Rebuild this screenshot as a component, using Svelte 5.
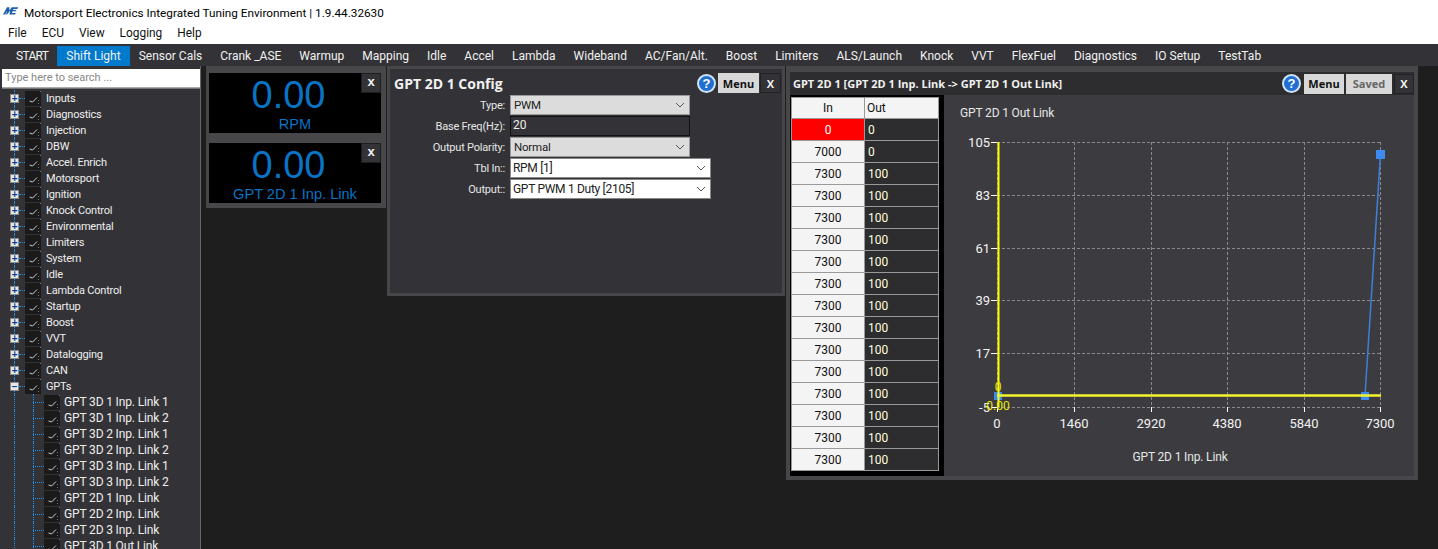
<script lang="ts">
  const tabs = ["START","Shift Light","Sensor Cals","Crank _ASE","Warmup","Mapping","Idle","Accel","Lambda","Wideband","AC/Fan/Alt.","Boost","Limiters","ALS/Launch","Knock","VVT","FlexFuel","Diagnostics","IO Setup","TestTab"];
  const roots = ["Inputs","Diagnostics","Injection","DBW","Accel. Enrich","Motorsport","Ignition","Knock Control","Environmental","Limiters","System","Idle","Lambda Control","Startup","Boost","VVT","Datalogging","CAN"];
  const children = ["GPT 3D 1 Inp. Link 1","GPT 3D 1 Inp. Link 2","GPT 3D 2 Inp. Link 1","GPT 3D 2 Inp. Link 2","GPT 3D 3 Inp. Link 1","GPT 3D 3 Inp. Link 2","GPT 2D 1 Inp. Link","GPT 2D 2 Inp. Link","GPT 2D 3 Inp. Link","GPT 3D 1 Out Link"];
  const rows = [[0,0],[7000,0],...Array(14).fill([7300,100])];
  const yTicks = [[105,142],[83,195],[61,248],[39,300],[17,353],[-5,407]];
  const xTicks = [[0,997],[1460,1074],[2920,1151],[4380,1227],[5840,1304],[7300,1380]];
</script>

{#snippet nodeIcon()}
  <span class="nicon"><svg width="16" height="15" viewBox="0 0 16 15"><path d="M4.500 10 L7.500 11 L12 6.500" stroke="#cfcfcf" fill="none"/><path d="M13.500 9v1M13.500 12v1M15.500 0v1" stroke="#777"/></svg></span>
{/snippet}

{#snippet chevron()}
  <svg width="10" height="6" viewBox="0 0 10 6"><path d="M1 1 L5 5 L9 1" fill="none" stroke="#555"/></svg>
{/snippet}

<div class="app">
  <div class="titlebar">
    <svg class="logo" width="16" height="9" viewBox="0 0 20 10"><path d="M0 10 L5 1 H8 L8 5 L11 1 H19 L18 3 H13 L12.500 4.500 H17 L16 6 H12 L11 8 H16 L15 10 H8 L9 5 L5 10 H4 L5 5 L3 10 Z" fill="#1b5fae"/></svg>
    <span>Motorsport Electronics Integrated Tuning Environment | 1.9.44.32630</span>
  </div>
  <div class="menubar">
    <span>File</span><span>ECU</span><span>View</span><span>Logging</span><span>Help</span>
  </div>
  <div class="tabs">
    {#each tabs as t}
      <div class="tab" class:active={t === "Shift Light"}>{t}</div>
    {/each}
  </div>
  <div class="workspace">
    <aside class="sidebar">
      <div class="search">Type here to search ...</div>
      <div class="tree">
        {#each roots as r}
          <div class="node">
            <span class="vline"></span>
            <span class="exp">+</span>
            <span class="hdots"></span>
            {@render nodeIcon()}
            <span class="nlabel">{r}</span>
          </div>
        {/each}
        <div class="node">
          <span class="vline"></span>
          <span class="exp open">−</span>
          <span class="hdots"></span>
          {@render nodeIcon()}
          <span class="nlabel">GPTs</span>
        </div>
        {#each children as c}
          <div class="node child">
            <span class="vline"></span>
            <span class="vline second"></span>
            <span class="hdots"></span>
            {@render nodeIcon()}
            <span class="nlabel">{c}</span>
          </div>
        {/each}
      </div>
    </aside>

    <div class="gauges">
      <div class="gauge">
        <div class="closex">x</div>
        <div class="gval">0.00</div>
        <div class="gname">RPM</div>
      </div>
      <div class="gauge">
        <div class="closex">x</div>
        <div class="gval">0.00</div>
        <div class="gname">GPT 2D 1 Inp. Link</div>
      </div>
    </div>

    <section class="config">
      <header class="chead">
        <h2>GPT 2D 1 Config</h2>
        <span class="help">?</span>
        <button class="btn">Menu</button>
        <button class="xbtn">X</button>
      </header>
      <div class="form">
        <label>Type:</label>
        <div class="sel gray w180">PWM{@render chevron()}</div>
        <label>Base Freq(Hz):</label>
        <div class="inp w180">20</div>
        <label>Output Polarity:</label>
        <div class="sel gray w180">Normal{@render chevron()}</div>
        <label>Tbl In::</label>
        <div class="sel white">RPM [1]{@render chevron()}</div>
        <label>Output::</label>
        <div class="sel white">GPT PWM 1 Duty [2105]{@render chevron()}</div>
      </div>
    </section>

    <section class="tablewin">
      <header class="thead">
        <h3>GPT 2D 1 [GPT 2D 1 Inp. Link -&gt; GPT 2D 1 Out Link]</h3>
        <span class="help">?</span>
        <button class="btn">Menu</button>
        <button class="btn saved">Saved</button>
        <button class="xbtn">X</button>
      </header>
      <div class="tbody">
        <div class="grid">
          <div class="hc">In</div><div class="hc left">Out</div>
          {#each rows as r, i}
            <div class="inc" class:hot={i === 0}>{r[0]}</div>
            <div class="outc">{r[1]}</div>
          {/each}
        </div>
        <div class="chart">
          <svg width="470" height="381" viewBox="944 95 470 381">
            <text x="960" y="117" class="ct">GPT 2D 1 Out Link</text>
            <g stroke="#8a8a8a" stroke-dasharray="3 2" fill="none">
              {#each yTicks as t}<line x1="997" x2="1380" y1={t[1] + 0.5} y2={t[1] + 0.5}/>{/each}
              {#each xTicks as t}<line y1="142" y2="407" x1={t[1] + 0.5} x2={t[1] + 0.5}/>{/each}
            </g>
            {#each yTicks as t}
              <text x="990" y={t[1] + 5} text-anchor="end" class="ax">{t[0]}</text>
              <line x1="991" x2="997" y1={t[1] + 0.5} y2={t[1] + 0.5} stroke="#fff"/>
            {/each}
            {#each xTicks as t}
              <text x={t[1]} y="428" text-anchor="middle" class="ax">{t[0]}</text>
              <line y1="407" y2="412" x1={t[1] + 0.5} x2={t[1] + 0.5} stroke="#fff"/>
            {/each}
            <text x="1180" y="461" text-anchor="middle" class="ct">GPT 2D 1 Inp. Link</text>
            <line x1="1365" y1="396" x2="1380.500" y2="154" stroke="#3d7fd9" stroke-width="1.500"/>
            <rect x="994" y="392" width="8" height="8" fill="#3d8bf0"/>
            <rect x="1361" y="392" width="8" height="8" fill="#3d8bf0"/>
            <rect x="1376" y="150" width="9" height="9" fill="#3d8bf0"/>
            <line x1="998.500" x2="998.500" y1="142" y2="407" stroke="#ffff00" stroke-width="2"/>
            <line x1="997" x2="1381" y1="395.500" y2="395.500" stroke="#f4f42c" stroke-width="2.500"/>
            <text x="998" y="391" text-anchor="middle" class="yl">0</text>
            <text x="998" y="410" text-anchor="middle" class="yl">0.00</text>
          </svg>
        </div>
      </div>
    </section>
  </div>
</div>

<style>
  :global(body) { margin: 0; background: #1e1e1e; }

  .app {
    width: 1438px;
    height: 549px;
    overflow: hidden;
    display: flex;
    flex-direction: column;
    font-family: Roboto, sans-serif;
  }

  .titlebar {
    height: 22px;
    background: #fff;
    display: flex;
    align-items: center;
    padding-left: 3px;
    gap: 5px;
    font-size: 11.750px;
    color: #000;
    box-sizing: border-box;
    padding-top: 4px;
  }
  .logo { margin-top: -6px; }

  .menubar {
    height: 22px;
    background: #fff;
    display: flex;
    align-items: center;
    gap: 15px;
    padding-left: 8px;
    font-size: 11.900px;
    color: #111;
  }

  .tabs {
    height: 22px;
    background: #333337;
    display: flex;
    align-items: flex-end;
    padding-left: 7px;
    color: #f1f1f1;
    font-size: 12px;
  }
  .tab {
    padding: 0 9px;
    height: 20px;
    line-height: 20px;
    white-space: nowrap;
  }
  .tab:first-child { letter-spacing: -0.7px; }
  .tab.active { background: #007acc; }

  .workspace {
    flex: 1;
    display: flex;
    align-items: flex-start;
    background: #1e1e1e;
    min-height: 0;
  }

  .sidebar {
    width: 200px;
    height: 483px;
    flex: none;
    background: #333337;
    border-right: 1px solid #666;
    overflow: hidden;
    margin-right: 5px;
  }
  .search {
    height: 19px;
    margin: 3px 0 0 2px;
    background: #fff;
    color: #888;
    font: 11px/18px Roboto, sans-serif;
    padding-left: 3px;
    border-bottom: 1px solid #aaa;
    box-sizing: border-box;
  }
  .tree { padding-top: 1px; border-top: 1px solid #777; margin-left: 2px; }
  .node {
    position: relative;
    height: 16px;
    display: flex;
    align-items: center;
    font: 11px Roboto, sans-serif;
    letter-spacing: -0.2px;
    color: #eee;
  }
  .node.child { font-size: 12px; letter-spacing: -0.15px; }
  .vline {
    position: absolute;
    left: 12px;
    top: 0;
    bottom: 0;
    border-left: 1px dotted #1e8fe8;
  }
  .vline.second { left: 31px; }
  .exp {
    width: 9px;
    height: 9px;
    margin-left: 8px;
    background: #e8e8e8;
    border: 1px solid #8a8a8a;
    box-sizing: border-box;
    color: #14408c;
    font: bold 10px/7px "Liberation Sans", sans-serif;
    text-align: center;
    flex: none;
    position: relative;
  }
  .hdots {
    width: 6px;
    border-top: 1px dotted #1e8fe8;
    flex: none;
    position: relative;
  }
  .child .hdots { width: 11px; margin-left: 31px; }
  .nicon {
    width: 16px;
    height: 15px;
    background: #1a1a1a;
    flex: none;
    margin-right: 5px;
    position: relative;
  }
  .nicon svg { display: block; }
  .child .nicon { margin-right: 4px; }
  .nlabel { white-space: nowrap; }

  .gauges {
    width: 180px;
    flex: none;
    background: #47474a;
    padding: 7px 5px 5px 3px;
    box-sizing: border-box;
    display: flex;
    flex-direction: column;
    gap: 10px;
  }
  .gauge {
    position: relative;
    height: 60px;
    background: #000;
    text-align: center;
    color: #0a73c4;
    font-family: "Liberation Sans", sans-serif;
    padding-top: 1px;
    box-sizing: border-box;
  }
  .closex {
    position: absolute;
    right: 0;
    top: 0;
    width: 20px;
    height: 20px;
    background: #333337;
    border: 1px solid #1e1e1e;
    box-sizing: border-box;
    color: #f1f1f1;
    font: bold 13px/16px "Liberation Sans", sans-serif;
  }
  .gval { font-size: 38px; line-height: 42px; padding-right: 13px; }
  .gname { font-size: 14.600px; line-height: 16px; }

  .config {
    width: 398px;
    height: 230px;
    margin-left: 1px;
    flex: none;
    background: #333337;
    border: 3px solid #47474a;
    box-sizing: border-box;
  }
  .chead, .thead {
    display: flex;
    align-items: center;
  }
  .chead { height: 24px; padding: 4px 0 0 4px; box-sizing: border-box; gap: 1px; }
  .chead h2 {
    margin: 1px auto 0 0;
    font: 700 14px "Open Sans", sans-serif;
    color: #f1f1f1;
  }
  .chead .btn { width: 41px; }
  .chead .xbtn { width: 21px; margin-right: 1px; }
  .help {
    width: 19px;
    height: 19px;
    border-radius: 50%;
    background: #1f6fd0;
    border: 2px solid #cfe2fa;
    box-sizing: border-box;
    color: #fff;
    font: bold 13px/15px "Liberation Sans", sans-serif;
    text-align: center;
    margin-right: 1px;
  }
  .btn {
    height: 20px;
    width: 40px;
    border: 0;
    padding: 0;
    background: #d8d8d8;
    color: #111;
    font: 700 11px "Open Sans", sans-serif;
  }
  .btn.saved { width: 46px; color: #666; }
  .xbtn {
    width: 20px;
    height: 20px;
    border: 1px solid #222;
    padding: 0;
    background: #333337;
    color: #f1f1f1;
    font: 700 11px "Open Sans", sans-serif;
  }

  .form {
    display: grid;
    grid-template-columns: 120px 201px;
    align-items: center;
    justify-items: start;
    row-gap: 1px;
    padding-top: 2px;
    font: 12px Roboto, sans-serif;
    color: #e6e6e6;
  }
  .form label {
    justify-self: end;
    padding-right: 5px;
    font-size: 11px;
    letter-spacing: -0.2px;
  }
  .sel, .inp {
    height: 20px;
    box-sizing: border-box;
    display: flex;
    align-items: center;
    justify-content: space-between;
    padding: 0 4px 0 3px;
    width: 201px;
    color: #222;
  }
  .w180 { width: 180px; }
  .sel.gray { background: #dcdcdc; border: 1px solid #999; font-size: 11.500px; letter-spacing: -0.2px; }
  .sel.white { background: #fff; border: 1px solid #888; padding-left: 2px; letter-spacing: -0.3px; }
  .inp { background: #333337; border: 1px solid #111; color: #eee; align-items: flex-start; padding: 1px 0 0 2px; }

  .tablewin {
    width: 632px;
    height: 414px;
    flex: none;
    margin-left: 1px;
    background: #000;
    border: 4px solid #47474a;
    border-top-width: 6px;
    box-sizing: border-box;
  }
  .thead { height: 23px; background: #2d2d30; padding-left: 3px; gap: 2px; }
  .thead h3 {
    margin: 0 auto 0 0;
    font: 700 11px "Open Sans", sans-serif;
    color: #f1f1f1;
  }
  .tbody { display: flex; }
  .grid {
    width: 148px;
    margin: 2px 5px 0 1px;
    flex: none;
    display: grid;
    grid-template-columns: 74px 74px;
    grid-auto-rows: 22px;
    font: 12px/22px Roboto, sans-serif;
    align-self: flex-start;
  }
  .hc, .inc {
    background: #f4f4f4;
    color: #111;
    text-align: center;
    border: 1px solid #999;
    border-top: 0;
    box-sizing: border-box;
  }
  .hc { border-top: 1px solid #999; line-height: 20px; }
  .hc.left { text-align: left; padding-left: 2px; border-left: 0; }
  .inc.hot { background: #ff0000; color: #fff; }
  .outc {
    background: #2d2d30;
    color: #ffd;
    padding-left: 3px;
    border-bottom: 1px solid #999;
    border-right: 1px solid #999;
    box-sizing: border-box;
  }
  .chart { flex: 1; background: #3c3c40; height: 381px; }
  .chart svg { display: block; }
  .ct { font: 12px Roboto, sans-serif; fill: #e6e6e6; letter-spacing: -0.15px; }
  .ax { font: 13px Roboto, sans-serif; fill: #f2f2f2; }
  .yl { font: 12px Roboto, sans-serif; fill: #e8e800; }
</style>
